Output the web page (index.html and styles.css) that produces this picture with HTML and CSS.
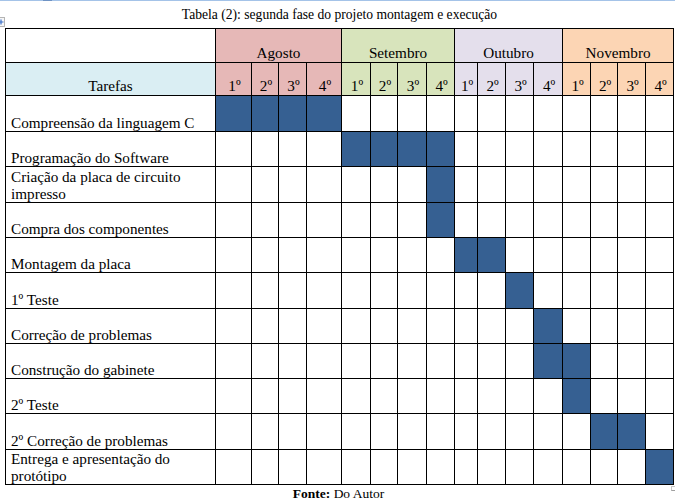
FILE: index.html
```html
<!DOCTYPE html>
<html lang="pt">
<head>
<meta charset="utf-8">
<title>Tabela (2)</title>
<link rel="stylesheet" href="styles.css">
</head>
<body>
<div class="topbar"><span class="topbar-mark"></span></div>
<div class="doc">
  <p class="caption">Tabela (2): segunda fase do projeto montagem e execução</p>
  <div class="table-wrap">
    <span class="move-handle"><svg width="9" height="8" viewBox="0 0 9 8"><path d="M6 1.5v5M3.5 4h5" stroke="#3a6fc8" stroke-width="1.2" fill="none"/></svg></span>
    <table class="gantt">
      <colgroup>
        <col class="w210"><col class="w36"><col class="w27"><col class="w28"><col class="w35">
        <col class="w29"><col class="w27"><col class="w29"><col class="w28">
        <col class="w23"><col class="w28"><col class="w28"><col class="w29">
        <col class="w28"><col class="w27"><col class="w28"><col class="w28">
      </colgroup>
      <tr class="h34">
        <td class="task"></td>
        <td colspan="4" class="month ago">Agosto</td>
        <td colspan="4" class="month set">Setembro</td>
        <td colspan="4" class="month out">Outubro</td>
        <td colspan="4" class="month nov">Novembro</td>
      </tr>
      <tr class="h33">
        <td class="tarefas">Tarefas</td>
        <td class="wk ago">1º</td><td class="wk ago">2º</td><td class="wk ago">3º</td><td class="wk ago">4º</td>
        <td class="wk set">1º</td><td class="wk set">2º</td><td class="wk set">3º</td><td class="wk set">4º</td>
        <td class="wk out">1º</td><td class="wk out">2º</td><td class="wk out">3º</td><td class="wk out">4º</td>
        <td class="wk nov">1º</td><td class="wk nov">2º</td><td class="wk nov">3º</td><td class="wk nov">4º</td>
      </tr>
      <tr class="h36">
        <td class="task">Compreensão da linguagem C</td>
        <td class="on"></td><td class="on"></td><td class="on"></td><td class="on"></td>
        <td></td><td></td><td></td><td></td><td></td><td></td><td></td><td></td><td></td><td></td><td></td><td></td>
      </tr>
      <tr class="h35">
        <td class="task">Programação do Software</td>
        <td></td><td></td><td></td><td></td>
        <td class="on"></td><td class="on"></td><td class="on"></td><td class="on"></td>
        <td></td><td></td><td></td><td></td><td></td><td></td><td></td><td></td>
      </tr>
      <tr class="h36">
        <td class="task">Criação da placa de circuito impresso</td>
        <td></td><td></td><td></td><td></td>
        <td></td><td></td><td></td><td class="on"></td>
        <td></td><td></td><td></td><td></td><td></td><td></td><td></td><td></td>
      </tr>
      <tr class="h35">
        <td class="task">Compra dos componentes</td>
        <td></td><td></td><td></td><td></td>
        <td></td><td></td><td></td><td class="on"></td>
        <td></td><td></td><td></td><td></td><td></td><td></td><td></td><td></td>
      </tr>
      <tr class="h35">
        <td class="task">Montagem da placa</td>
        <td></td><td></td><td></td><td></td><td></td><td></td><td></td><td></td>
        <td class="on"></td><td class="on"></td><td></td><td></td>
        <td></td><td></td><td></td><td></td>
      </tr>
      <tr class="h36">
        <td class="task">1º Teste</td>
        <td></td><td></td><td></td><td></td><td></td><td></td><td></td><td></td>
        <td></td><td></td><td class="on"></td><td></td>
        <td></td><td></td><td></td><td></td>
      </tr>
      <tr class="h35">
        <td class="task">Correção de problemas</td>
        <td></td><td></td><td></td><td></td><td></td><td></td><td></td><td></td>
        <td></td><td></td><td></td><td class="on"></td>
        <td></td><td></td><td></td><td></td>
      </tr>
      <tr class="h35">
        <td class="task">Construção do gabinete</td>
        <td></td><td></td><td></td><td></td><td></td><td></td><td></td><td></td>
        <td></td><td></td><td></td><td class="on"></td>
        <td class="on"></td><td></td><td></td><td></td>
      </tr>
      <tr class="h35">
        <td class="task">2º Teste</td>
        <td></td><td></td><td></td><td></td><td></td><td></td><td></td><td></td>
        <td></td><td></td><td></td><td></td>
        <td class="on"></td><td></td><td></td><td></td>
      </tr>
      <tr class="h36">
        <td class="task">2º Correção de problemas</td>
        <td></td><td></td><td></td><td></td><td></td><td></td><td></td><td></td>
        <td></td><td></td><td></td><td></td>
        <td></td><td class="on"></td><td class="on"></td><td></td>
      </tr>
      <tr class="h35">
        <td class="task">Entrega e apresentação do protótipo</td>
        <td></td><td></td><td></td><td></td><td></td><td></td><td></td><td></td>
        <td></td><td></td><td></td><td></td>
        <td></td><td></td><td></td><td class="on"></td>
      </tr>
    </table>
    <span class="resize-handle"></span>
  </div>
  <p class="source"><b>Fonte:</b> Do Autor</p>
</div>
</body>
</html>
```

FILE: styles.css
```css
html, body {
  margin: 0;
  padding: 0;
  background: #ffffff;
}

body {
  font-family: "Liberation Serif", "Times New Roman", serif;
  color: #000000;
  width: 675px;
}

.topbar {
  height: 1px;
  background: #a4c3e8;
  display: flex;
}

.topbar-mark {
  margin-left: 43px;
  width: 9px;
  height: 1px;
  background: #6f93c4;
}

.doc {
  width: 675px;
}

.caption {
  margin: 0;
  height: 27px;
  box-sizing: border-box;
  padding: 6px 0 0 5px;
  width: 674px;
  text-align: center;
  font-size: 13.6px;
  line-height: 15px;
}

.table-wrap {
  position: relative;
  padding-left: 5px;
}

.move-handle {
  position: absolute;
  left: -6px;
  top: -11px;
  width: 9px;
  height: 8px;
  border: 1px solid #b4b4b4;
  background: #f6f6f6;
  display: flex;
}

.resize-handle {
  position: absolute;
  left: 671px;
  bottom: -6px;
  width: 3px;
  height: 3px;
  border: 1px solid #a0a0a0;
  border-left-color: #c8c8c8;
  border-top-color: #c8c8c8;
}

.gantt {
  table-layout: fixed;
  border-collapse: separate;
  border-spacing: 0;
  width: 669px;
  border-left: 1px solid #000;
  border-top: 1px solid #000;
  font-size: 15.2px;
  line-height: 17px;
}

.gantt td {
  box-sizing: border-box;
  border-right: 1px solid #000;
  border-bottom: 1px solid #000;
  padding: 0;
  vertical-align: bottom;
  background: #ffffff;
  overflow: hidden;
}

.w210 { width: 210px; }
.w36 { width: 36px; }
.w35 { width: 35px; }
.w29 { width: 29px; }
.w28 { width: 28px; }
.w27 { width: 27px; }
.w23 { width: 23px; }

.h33 { height: 33px; }
.h34 { height: 34px; }
.h35 { height: 35px; }
.h36 { height: 36px; }

.gantt td.task {
  padding: 0 4px 0 5px;
}

.gantt td.tarefas {
  background: #daeef3;
  text-align: center;
  padding-bottom: 1px;
}

.gantt td.month {
  text-align: center;
  padding-bottom: 1px;
}

.gantt td.wk {
  text-align: center;
  padding: 0 0 1px 2px;
}

.gantt td.ago { background: #e6b8b7; }
.gantt td.set { background: #d8e4bc; }
.gantt td.out { background: #e4dfec; }
.gantt td.nov { background: #fcd5b4; }

.gantt td.on { background: #366092; }

.source {
  margin: 0;
  padding-top: 1px;
  width: 677px;
  text-align: center;
  font-size: 13.5px;
  line-height: 16px;
}

.source b {
  font-weight: bold;
}
```
